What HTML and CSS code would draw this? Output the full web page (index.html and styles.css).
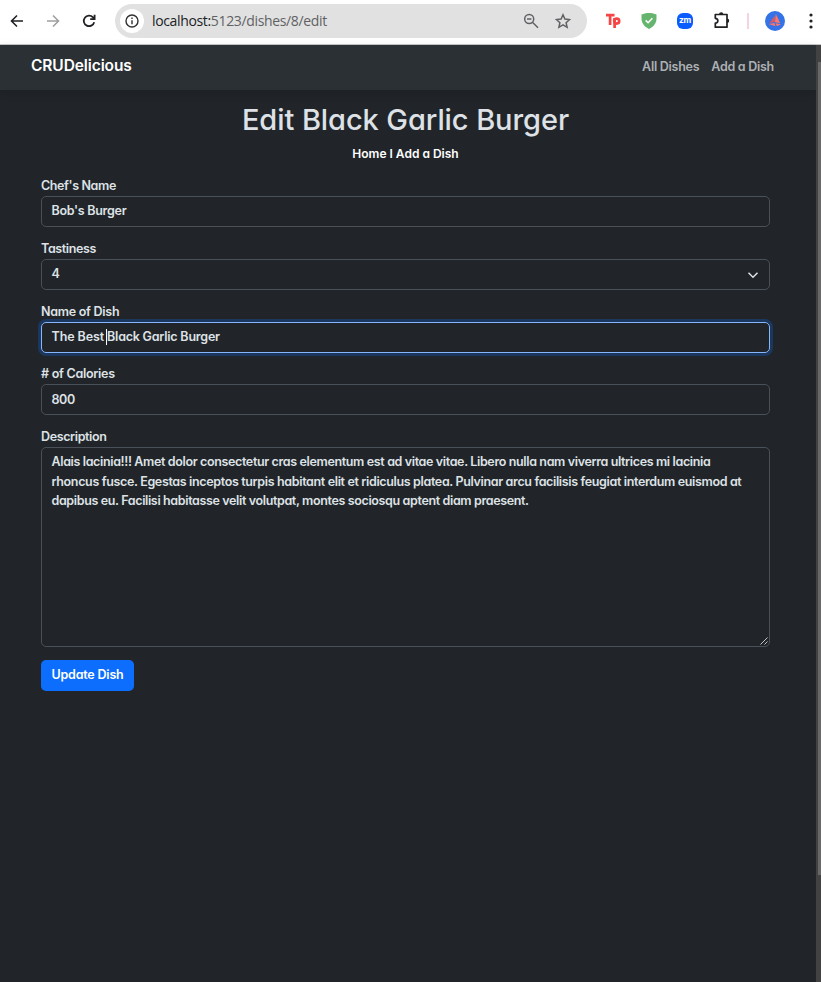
FILE: index.html
```html
<!DOCTYPE html>
<html lang="en">
<head>
<meta charset="utf-8">
<title>Edit Black Garlic Burger</title>
<link rel="stylesheet" href="styles.css">
</head>
<body>
<header class="toolbar">
  <svg class="nav-icon back" viewBox="0 0 14 14"><path d="M13 7H2M7 1.5 1.5 7 7 12.5"/></svg>
  <svg class="nav-icon forward" viewBox="0 0 14 14"><path d="M1 7h11M7 1.5 12.500 7 7 12.500"/></svg>
  <svg class="nav-icon reload" viewBox="0 0 14 14"><path d="M12.200 8.200A5.300 5.300 0 1 1 11 3.300L12.400 5M12.600 .8V5.200H8.200"/></svg>
  <div class="address">
    <span class="info"><svg viewBox="0 0 14 14"><circle cx="7" cy="7" r="6"/><path d="M7 6.300v4M7 3.500v1.500"/></svg></span>
    <span class="url"><b>localhost:</b>5123/dishes/8/edit</span>
    <svg class="search" viewBox="0 0 16 16"><circle cx="6.200" cy="6" r="4.500"/><path d="M9.700 9.500 15 14.700M4 6h4.400"/></svg>
    <svg class="star" viewBox="0 0 16 16"><path d="m8 1.800 1.900 4.300 4.700.5-3.500 3.100 1 4.600L8 11.900l-4.100 2.400 1-4.600-3.500-3.100 4.700-.5z"/></svg>
  </div>
  <div class="extensions">
    <svg class="tp" viewBox="0 0 16 16"><path d="M1 2.200h8.500M5.100 2.200V12"/><path d="M9.600 5v10"/><circle cx="11.700" cy="8.100" r="2.500"/></svg>
    <svg class="shield" viewBox="0 0 16 16"><path class="body" d="M8 0c3 0 5.500.7 7.500 1.500v4C15.500 10 12.700 13.800 8 16 3.300 13.800.5 10 .5 5.500v-4C2.500.7 5 0 8 0z"/><path class="check" d="m4.700 7.400 2.400 2.400 4.300-4.500"/></svg>
    <span class="zoom-app">zm</span>
    <svg class="puzzle" viewBox="0 0 16 18"><path d="M1.300 3.500H13V7.700V16.200H1.300v-4c3.400-.2 3.400-4.700 0-4.900z"/><path class="knob" d="M5 3.500a2.200 2.200 0 0 1 4.400 0zM13 7.600a2.200 2.200 0 0 1 0 4.400z"/></svg>
    <i class="separator"></i>
    <svg class="avatar" viewBox="0 0 20 20"><circle cx="10" cy="10" r="10"/><path class="sail" d="M10.800 2.700 15.200 12.200 10 11.200z"/><path class="sail dark" d="M9.900 4.500V11L4.500 12z"/><path class="sail" d="M3.500 13 9.500 12 10.500 15.200z"/><path class="sail" d="M10.500 12.200 16 13.300 12 15.200z"/></svg>
    <svg class="dots" viewBox="0 0 4 16"><circle cx="2" cy="2" r="1.600"/><circle cx="2" cy="8" r="1.600"/><circle cx="2" cy="14" r="1.600"/></svg>
  </div>
</header>
<div class="viewport">
  <div class="page">
    <nav class="navbar">
      <a class="brand">CRUDelicious</a>
      <div class="links"><a class="all">All Dishes</a><a class="add">Add a Dish</a></div>
    </nav>
    <main class="content">
      <h1><span>Edit Black Garlic Burger</span></h1>
      <div class="crumbs"><span>Home I Add a Dish</span></div>
      <form>
        <div class="field"><label class="l-chef">Chef's Name</label><div class="control"><span class="v-chef">Bob's Burger</span></div></div>
        <div class="field"><label class="l-taste">Tastiness</label><div class="control select"><span>4</span><svg viewBox="0 0 16 16"><path d="m2 5 6 6 6-6"/></svg></div></div>
        <div class="field"><label class="l-dish">Name of Dish</label><div class="control focused"><span class="v-best">The Best</span><i class="caret"></i><span class="v-dish">Black Garlic Burger</span></div></div>
        <div class="field"><label class="l-cal"># of Calories</label><div class="control"><span class="v-cal">800</span></div></div>
        <div class="field"><label class="l-desc">Description</label><div class="control textarea"><p class="line1">Alais lacinia!!! Amet dolor consectetur cras elementum est ad vitae vitae. Libero nulla nam viverra ultrices mi lacinia</p><p class="line2">rhoncus fusce. Egestas inceptos turpis habitant elit et ridiculus platea. Pulvinar arcu facilisis feugiat interdum euismod at</p><p class="line3">dapibus eu. Facilisi habitasse velit volutpat, montes sociosqu aptent diam praesent.</p><svg class="grip" viewBox="0 0 8 8"><path d="M.5 7.500 7.500.5M4.500 7.500l3-3"/></svg></div></div>
        <button type="button"><span>Update Dish</span></button>
      </form>
    </main>
  </div>
  <div class="scrollbar"><div class="thumb"></div></div>
</div>
</body>
</html>
```
FILE: styles.css
```css
* { box-sizing: border-box; }
body { margin: 0; width: 821px; height: 982px; overflow: hidden; background: #212529; font-family: Inter, "Liberation Sans", sans-serif; font-size: 12.5px; font-weight: 600; line-height: 19.600px; letter-spacing: -.38px; color: #dee2e6; font-feature-settings: "cv11" 1; }
svg { display: block; flex: none; fill: none; }
p { margin: 0; white-space: nowrap; }
.toolbar { display: flex; align-items: center; height: 45px; padding: 0 7px 3px 10px; background: #fff; border-bottom: 1px solid #c8c8c8; }
.nav-icon { width: 14px; height: 14px; stroke: #202124; stroke-width: 1.600; }
.forward { margin-left: 22px; stroke: #a0a0a0; }
.reload { margin-left: 22px; stroke-width: 1.800; }
.address { display: flex; align-items: center; width: 472px; height: 34px; margin-left: 19px; padding: 0 16px 0 5px; border-radius: 17px; background: #e1e1e1; }
.info { display: grid; place-items: center; width: 24px; height: 24px; border-radius: 50%; background: #fff; }
.info svg { width: 14px; height: 14px; stroke: #303134; stroke-width: 1.400; }
.url { margin-left: 8px; color: #606165; font: 400 14px/20px "Open Sans", sans-serif; letter-spacing: -.35px; }
.url b { font-weight: 400; color: #202124; }
.search { width: 16px; height: 16px; margin-left: auto; margin-right: 16px; stroke: #606165; stroke-width: 1.500; }
.star { width: 16px; height: 16px; stroke: #606165; stroke-width: 1.500; }
.extensions { display: flex; align-items: center; margin-left: 18px; }
.tp { width: 16px; height: 16px; stroke: #f64545; stroke-width: 2.700; }
.shield { width: 16px; height: 16px; margin-left: 20px; }
.shield .body { fill: #65b56f; }
.shield .check { stroke: #fff; stroke-width: 1.500; }
.zoom-app { width: 16px; height: 16px; margin-left: 20px; border-radius: 6px; background: #0b5cff; color: #fff; font: 700 8.500px/14px Inter, sans-serif; text-align: center; }
.puzzle { width: 16px; height: 18px; margin-left: 21px; margin-top: -2px; stroke: #202124; stroke-width: 1.700; stroke-linejoin: round; }
.puzzle .knob { fill: #202124; stroke: none; }
.separator { width: 2px; height: 16px; margin-left: 17px; background: #f5d3e5; }
.avatar { width: 20px; height: 20px; margin-left: 16px; }
.avatar circle { fill: #3472e7; }
.sail { fill: #ff7668; }
.sail.dark { fill: #d85969; }
.dots { width: 4px; height: 16px; margin-left: 24px; fill: #202124; }
.viewport { display: flex; height: 937px; }
.page { width: 816px; }
.navbar { display: flex; justify-content: space-between; align-items: center; height: 45px; padding: 0 42px 0 31px; background: #2b3035; box-shadow: 0 3px 9px rgba(0,0,0,.15); }
.brand { color: #fff; font-size: 15.500px; margin-top: -4px; letter-spacing: -.1px; }
.links { display: flex; gap: 12px; color: #adb0b3; margin-top: -1px; letter-spacing: -.27px; }
.content { padding: 12px 46px 0 41px; }
h1 { margin: 0; text-align: center; font-size: 29px; line-height: 36px; font-weight: 500; letter-spacing: -.08px; white-space: nowrap; }
.crumbs { margin-top: 6px; text-align: center; color: #fff; font-size: 12px; letter-spacing: 0; }
.field { height: 62.800px; margin: 0; }
.field:first-child { margin-top: 12.500px; }
label { display: block; height: 20px; line-height: 20px; }
.l-cal, .l-dish { letter-spacing: -.27px; }
.control > span { white-space: nowrap; }
.control { position: relative; display: flex; align-items: center; height: 31px; padding: 0 9.500px 1px; border: 1px solid #495057; border-radius: 5px; }
.control.select { justify-content: space-between; padding-right: 10px; }
.select svg { width: 12px; height: 12px; margin-top: 2px; stroke: #dee2e6; stroke-width: 2; }
.v-chef { letter-spacing: -.28px; }
.v-dish { letter-spacing: -.22px; }
.v-best { letter-spacing: -.1px; }
.focused { border-color: #86b7fe; box-shadow: 0 0 0 3px rgba(13,110,253,.25); }
.caret { width: 1px; height: 16px; margin: 0 0 0 2px; background: #fff; }
.field:last-of-type { height: 232.500px; }
.textarea { display: block; height: 200px; padding: 4px 9.500px; }
.line1, .line3 { letter-spacing: -.363px; }
.line2 { letter-spacing: -.352px; }
.grip { position: absolute; right: 1px; bottom: 1px; width: 8px; height: 8px; stroke: #c6c8ca; stroke-width: 1; }
button { display: block; width: 93px; height: 31px; padding: 0; border: 0; border-radius: 5px; background: #0d6efd; color: #fff; font: inherit; font-feature-settings: inherit; letter-spacing: -.2px; }
.scrollbar { width: 5px; background: #424242; padding: 17px 0 0 2px; }
.thumb { height: 813px; background: #686868; }
```
